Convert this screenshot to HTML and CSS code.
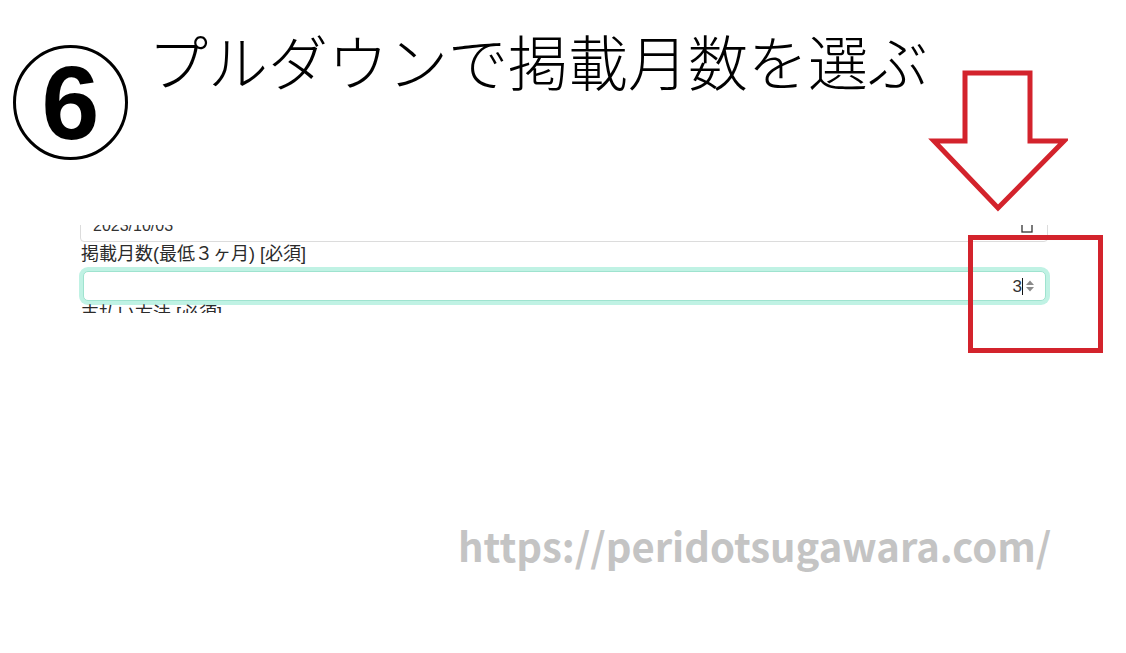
FILE: index.html
```html
<!DOCTYPE html>
<html lang="ja">
<head>
<meta charset="utf-8">
<title>プルダウンで掲載月数を選ぶ</title>
<link rel="stylesheet" href="styles.css">
</head>
<body>
<div class="page">
  <header class="head">
    <div class="step">6</div>
    <h1 class="title">プルダウンで掲載月数を選ぶ</h1>
  </header>

  <section class="shot">
    <div class="shot-inner">
      <div class="field date-field">
        <span class="date-text">2023/10/03</span>
        <svg class="cal" width="12" height="14" viewBox="0 0 12 14"><rect x="1" y="2" width="10" height="11" fill="none" stroke="#333" stroke-width="1.3"/><line x1="1" y1="5" x2="11" y2="5" stroke="#333" stroke-width="1.3"/></svg>
      </div>
      <div class="label">掲載月数(最低３ヶ月) [必須]</div>
      <div class="field num-field">
        <span class="num-val">3</span><span class="caret"></span>
        <svg class="spin" width="10" height="16" viewBox="0 0 10 16"><path d="M1 7 L5 2.5 L9 7 Z" fill="#8a8a8a"/><path d="M1 9 L5 13.5 L9 9 Z" fill="#8a8a8a"/></svg>
      </div>
      <div class="label">支払い方法 [必須]</div>
    </div>
  </section>

  <p class="url">https://peridotsugawara.com/</p>

  <svg class="arrow" width="140" height="150" viewBox="928 66 140 150"><path d="M965 73 L1030 73 L1030 141 L1064 141 L998 208 L934 141 L965 141 Z" fill="none" stroke="#d3232c" stroke-width="5" stroke-linejoin="miter"/></svg>
  <div class="callout"></div>
</div>
</body>
</html>
```

FILE: styles.css
```css
html, body {
  margin: 0;
  padding: 0;
  background: #fff;
}
.page {
  position: relative;
  width: 1126px;
  height: 653px;
  overflow: hidden;
  font-family: "Liberation Sans", "Noto Sans CJK JP", sans-serif;
}
.head {
  display: flex;
  align-items: flex-start;
  padding: 30px 0 0 13px;
  gap: 20px;
}
.step {
  margin-top: 15px;
  width: 109px;
  height: 109px;
  border: 3px solid #000;
  border-radius: 50%;
  display: flex;
  align-items: center;
  justify-content: center;
  font-family: "Liberation Sans", sans-serif;
  font-weight: bold;
  font-size: 104px;
  line-height: 1;
  color: #000;
  flex: none;
}
.title {
  margin: 0;
  font-family: "Noto Sans CJK JP", sans-serif;
  font-weight: 300;
  font-size: 60px;
  line-height: 60px;
  color: #000;
  white-space: nowrap;
}
.shot {
  margin: 65px 0 0 75px;
  width: 980px;
  height: 88px;
  overflow: hidden;
}
.shot-inner {
  padding-left: 5px;
  width: 968px;
}
.field {
  box-sizing: border-box;
  display: flex;
  align-items: center;
  background: #fff;
  font-size: 16px;
  color: #333;
}
.date-field {
  margin-top: -21px;
  height: 38px;
  border: 1px solid #dcdcdc;
  border-radius: 4px;
  padding: 0 14px 0 12px;
  justify-content: space-between;
}
.date-text {
  line-height: 1;
  margin-top: 6px;
}
.cal {
  margin-top: 6px;
}
.label {
  margin: 0 0 0 1px;
  font-size: 18px;
  line-height: 24px;
  color: #2b2b2b;
  font-family: "Liberation Sans", "Noto Sans CJK JP", sans-serif;
}
.num-field {
  margin: 5px 2px 0 3px;
  height: 30px;
  border: 1px solid #9fe3cf;
  border-radius: 5px;
  box-shadow: 0 0 0 4px #c0f2e4;
  justify-content: flex-end;
  padding-right: 10px;
}
.num-field + .label {
  margin-top: 1px;
}
.num-val {
  font-size: 17px;
  line-height: 1;
  color: #333;
}
.caret {
  width: 1px;
  height: 17px;
  background: #111;
  margin: 0 2px 0 0;
}
.spin {
  display: block;
}
.url {
  margin: 212px 0 0 458px;
  font-family: "Noto Sans CJK JP", sans-serif;
  font-weight: bold;
  font-size: 40px;
  line-height: 1;
  color: #c4c4c4;
  white-space: nowrap;
}
.arrow {
  position: absolute;
  left: 928px;
  top: 66px;
}
.callout {
  position: absolute;
  left: 968px;
  top: 235px;
  width: 125px;
  height: 108px;
  border: 5px solid #d3232c;
}
```
